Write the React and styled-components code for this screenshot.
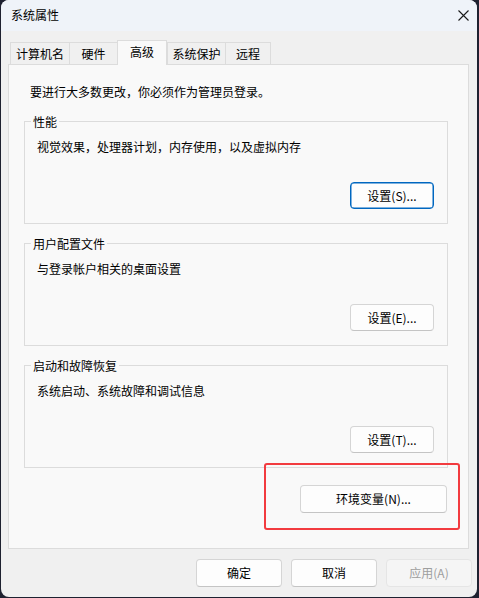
import styled, { createGlobalStyle } from "styled-components";

const GlobalStyle = createGlobalStyle`
  html, body {
    margin: 0;
    padding: 0;
    background: #1e2130;
  }
  body {
    font-family: "Noto Sans CJK SC", "Noto Sans", sans-serif;
    font-size: 12px;
    color: #000;
  }
`;

const tabs = [
  { label: "计算机名", width: 59 },
  { label: "硬件", width: 48 },
  { label: "高级", width: 50, active: true },
  { label: "系统保护", width: 58 },
  { label: "远程", width: 46 },
];

const groups = [
  { title: "性能", desc: "视觉效果，处理器计划，内存使用，以及虚拟内存", button: "设置(S)...", focused: true },
  { title: "用户配置文件", desc: "与登录帐户相关的桌面设置", button: "设置(E)..." },
  { title: "启动和故障恢复", desc: "系统启动、系统故障和调试信息", button: "设置(T)..." },
];

const CloseIcon = () => (
  <svg width="11" height="11" viewBox="0 0 11 11">
    <path d="M0.5 0.5 L10.5 10.5 M10.5 0.5 L0.5 10.5" stroke="#1a1a1a" strokeWidth="1.1" fill="none" />
  </svg>
);

const App = () => {
  return (
    <>
      <GlobalStyle />
      <Window>
        <TitleBar>
          <Title>系统属性</Title>
          <CloseButton>
            <CloseIcon />
          </CloseButton>
        </TitleBar>

        <TabRow>
          {tabs.map((t) => (
            <Tab key={t.label} $active={t.active} style={{ width: t.width }}>
              {t.label}
            </Tab>
          ))}
        </TabRow>

        <Panel>
          <Intro>要进行大多数更改，你必须作为管理员登录。</Intro>
          {groups.map((g) => (
            <Group key={g.title}>
              <Legend>{g.title}</Legend>
              <Desc>{g.desc}</Desc>
              <GroupButton $focused={g.focused}>{g.button}</GroupButton>
            </Group>
          ))}
          <EnvRow>
            <EnvButton>
              环境变量(N)...
              <Highlight />
            </EnvButton>
          </EnvRow>
        </Panel>

        <Footer>
          <DialogButton>确定</DialogButton>
          <DialogButton>取消</DialogButton>
          <DialogButton disabled>应用(A)</DialogButton>
        </Footer>
      </Window>
    </>
  );
};

const Window = styled.div`
  box-sizing: border-box;
  width: 476px;
  height: 597px;
  margin-left: 1px;
  background: #f0f0f0;
  border-radius: 8px;
  overflow: hidden;
  display: flex;
  flex-direction: column;
`;

const TitleBar = styled.div`
  height: 31px;
  display: flex;
  align-items: center;
  justify-content: space-between;
  padding: 0 8px 0 10px;
  background: #eff3f9;
`;

const Title = styled.div`
  font-size: 12px;
  line-height: 16px;
  margin-top: -1px;
`;

const CloseButton = styled.div`
  width: 12px;
  height: 12px;
  display: flex;
  align-items: center;
  justify-content: center;
  margin-top: -1px;
`;

const TabRow = styled.div`
  display: flex;
  align-items: flex-end;
  height: 25px;
  margin-top: 9px;
  padding-left: 9px;
  margin-bottom: -1px;
  position: relative;
  z-index: 1;
`;

const Tab = styled.div`
  box-sizing: border-box;
  display: flex;
  align-items: center;
  justify-content: center;
  height: ${(p) => (p.$active ? "25px" : "22px")};
  margin-bottom: ${(p) => (p.$active ? "0" : "1px")};
  padding-bottom: ${(p) => (p.$active ? "2px" : "0")};
  background: ${(p) => (p.$active ? "#f9f9f9" : "#f0f0f0")};
  border: 1px solid #dcdcdc;
  border-bottom: none;
  border-right: ${(p) => (p.$active ? "1px solid #dcdcdc" : "none")};
  line-height: 16px;
  white-space: nowrap;

  &:last-child {
    border-right: 1px solid #dcdcdc;
  }
`;

const Panel = styled.div`
  box-sizing: border-box;
  margin-left: 7px;
  width: 461px;
  height: 485px;
  background: #f9f9f9;
  border: 1px solid #dcdcdc;
  padding: 18px 0 0 0;
  display: flex;
  flex-direction: column;
`;

const Intro = styled.div`
  padding-left: 21px;
  line-height: 18px;
  margin-bottom: 20px;
`;

const Group = styled.div`
  position: relative;
  box-sizing: border-box;
  margin-left: 15px;
  width: 424px;
  height: 103px;
  border: 1px solid #dcdcdc;
  padding: 16px 13px 14px 12px;
  margin-bottom: 19px;
  display: flex;
  flex-direction: column;
`;

const Legend = styled.div`
  position: absolute;
  top: -9px;
  left: 6px;
  padding: 0 2px;
  background: #f9f9f9;
  line-height: 18px;
`;

const Desc = styled.div`
  line-height: 18px;
`;

const ButtonBase = styled.button`
  box-sizing: border-box;
  font-family: inherit;
  font-size: 12px;
  color: #000;
  background: #fdfdfd;
  border: 1px solid #d5d5d5;
  border-bottom-color: #c4c4c4;
  border-radius: 4px;
  padding: 0;
  line-height: 16px;
  cursor: default;
`;

const GroupButton = styled(ButtonBase)`
  margin-top: auto;
  align-self: flex-end;
  width: 84px;
  height: 27px;
  ${(p) =>
    p.$focused &&
    `
    border: 1px solid #0067c0;
    box-shadow: inset 0 0 0 0.5px #0067c0;
  `}
`;

const EnvRow = styled.div`
  display: flex;
  justify-content: flex-end;
  padding-right: 21px;
  margin-top: -2px;
`;

const EnvButton = styled(ButtonBase)`
  position: relative;
  width: 147px;
  height: 28px;
`;

const Highlight = styled.span`
  position: absolute;
  top: -23px;
  left: -37px;
  right: -14px;
  bottom: -18px;
  border: 2px solid #f23b3f;
  border-radius: 3px;
  pointer-events: none;
`;

const Footer = styled.div`
  display: flex;
  justify-content: flex-end;
  gap: 9px;
  padding: 10px 5px 0 0;
`;

const DialogButton = styled(ButtonBase)`
  width: 86px;
  height: 28px;

  &:disabled {
    color: #9e9e9e;
    background: #f5f5f5;
    border-color: #e5e5e5;
  }
`;

export default App;
